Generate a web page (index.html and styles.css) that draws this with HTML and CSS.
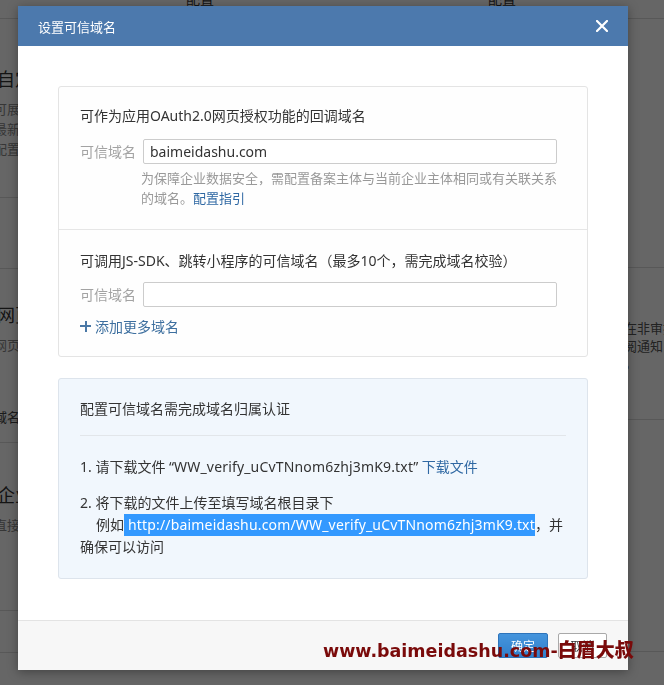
FILE: index.html
```html
<!DOCTYPE html>
<html lang="zh-CN">
<head>
    <meta charset="UTF-8">
    <meta name="viewport" content="width=device-width, initial-scale=1.0">
    <title>设置可信域名</title>
    <link rel="stylesheet" href="styles.css">
</head>
<body>
    <!-- page behind the dialog -->
    <div class="page">
        <div class="page-col page-left">
            <div class="bg-row bg-top"><span class="bg-cell">配置</span></div>
            <div class="bg-row bg-block1">
                <div class="bg-title">自定义菜单</div>
                <div class="bg-desc">可展示在应用会话中</div>
                <div class="bg-desc">最新内容</div>
                <div class="bg-desc">配置</div>
            </div>
            <div class="bg-row bg-block2"></div>
            <div class="bg-row bg-block3">
                <div class="bg-title">网页授权及JS-SDK</div>
                <div class="bg-desc">网页可调用</div>
                <div class="bg-desc bg-name">域名</div>
            </div>
            <div class="bg-row bg-block4"></div>
            <div class="bg-row bg-block5">
                <div class="bg-title">企业微信I</div>
                <div class="bg-desc">直接回调</div>
            </div>
            <div class="bg-row bg-block6"></div>
        </div>
        <div class="page-col page-right">
            <div class="bg-row bg-top"><span class="bg-cell">配置</span></div>
            <div class="bg-row bg-rblock1"></div>
            <div class="bg-row bg-rblock2">
                <div class="bg-desc">应用申请可在非审批</div>
                <div class="bg-desc">已完成签订阅通知</div>
                <div class="bg-desc">员工均可见。</div>
            </div>
            <div class="bg-row bg-rblock3"></div>
        </div>
    </div>
    <div class="mask"></div>

    <div class="dialog">
        <div class="dialog-hd">
            <span class="dialog-title">设置可信域名</span>
            <a class="dialog-close" href="#">
                <svg width="12" height="12" viewBox="0 0 12 12"><path d="M1 1 L11 11 M11 1 L1 11" stroke="#fff" stroke-width="2.2" stroke-linecap="square"/></svg>
            </a>
        </div>
        <div class="dialog-bd">
            <div class="panel">
                <div class="panel-sec">
                    <p class="sec-title">可作为应用OAuth2.0网页授权功能的回调域名</p>
                    <div class="field">
                        <label class="field-label">可信域名</label>
                        <div class="field-ctrl">
                            <input class="field-input" type="text" value="baimeidashu.com">
                            <p class="hint">为保障企业数据安全，需配置备案主体与当前企业主体相同或有关联关系的域名。<a class="link" href="#">配置指引</a></p>
                        </div>
                    </div>
                </div>
                <div class="panel-sec">
                    <p class="sec-title">可调用JS-SDK、跳转小程序的可信域名（最多10个，需完成域名校验）</p>
                    <div class="field">
                        <label class="field-label">可信域名</label>
                        <div class="field-ctrl">
                            <input class="field-input" type="text" value="">
                        </div>
                    </div>
                    <a class="add-more" href="#"><span class="plus"></span>添加更多域名</a>
                </div>
            </div>

            <div class="notice">
                <p class="notice-title">配置可信域名需完成域名归属认证</p>
                <p class="step">1. 请下载文件 “<span class="code">WW_verify_uCvTNnom6zhj3mK9.txt</span>” <a class="link" href="#">下载文件</a></p>
                <p class="step step2">2. 将下载的文件上传至填写域名根目录下<br><span class="indent">例如</span><span class="selected"><span class="code">http://baimeidashu.com/WW_verify_uCvTNnom6zhj3mK9.txt</span></span>，并<br>确保可以访问</p>
            </div>
        </div>
        <div class="dialog-ft">
            <button class="btn btn-primary">确定</button>
            <button class="btn">取消</button>
        </div>
    </div>

    <div class="watermark">www.baimeidashu.com-<span class="wm-cn">白眉大叔</span></div>
</body>
</html>
```

FILE: styles.css
```css
* {
    margin: 0;
    padding: 0;
    box-sizing: border-box;
}

body {
    font-family: 'Noto Sans', 'Noto Sans CJK SC', sans-serif;
    font-size: 14px;
    color: #333;
    background: #fff;
    width: 664px;
    height: 685px;
    overflow: hidden;
}

/* background page */
.page {
    display: flex;
    font-family: 'Noto Sans CJK SC', sans-serif;
}

.page-left {
    width: 340px;
}

.page-right {
    width: 324px;
}

.bg-row {
    border-bottom: 1px solid #dcdcdc;
}

.bg-top {
    height: 31px;
}

.bg-cell {
    display: block;
    margin-top: -12px;
    font-size: 14px;
    line-height: 20px;
}

.page-left .bg-cell {
    padding-left: 186px;
}

.page-right .bg-cell {
    padding-left: 148px;
}

.bg-block1 {
    height: 179px;
    padding-top: 47px;
}

.bg-title {
    font-size: 18px;
    line-height: 24px;
    margin-left: -3px;
    white-space: nowrap;
    margin-bottom: 9px;
}

.bg-desc {
    font-size: 13px;
    line-height: 20px;
    color: #888;
    white-space: nowrap;
}

.page-left .bg-desc {
    margin-left: -6px;
}

.bg-block2 {
    height: 71px;
}

.bg-block3 {
    height: 152px;
    padding-top: 33px;
}

.bg-name {
    margin-top: 52px;
    color: #444;
}

.bg-block4 {
    height: 22px;
}

.bg-block5 {
    height: 168px;
    padding-top: 39px;
}

.bg-block6 {
    height: 42px;
}

.bg-rblock1 {
    height: 249px;
}

.bg-rblock2 {
    height: 152px;
    padding-top: 51px;
}

.bg-rblock2 .bg-desc {
    line-height: 17.5px;
    padding-left: 219px;
    color: #555;
}

.bg-rblock3 {
    height: 232px;
}

.mask {
    position: fixed;
    inset: 0;
    background: rgba(0, 0, 0, 0.6);
}

/* dialog */
.dialog {
    position: absolute;
    left: 18px;
    top: 6px;
    width: 610px;
    background: #fff;
    box-shadow: 0 2px 10px rgba(0, 0, 0, 0.35);
}

.dialog-hd {
    height: 40px;
    padding: 0 20px;
    background: #4c79ad;
    display: flex;
    align-items: center;
    justify-content: space-between;
}

.dialog-title {
    color: #fff;
    font-family: 'Noto Sans CJK SC', sans-serif;
    font-size: 13px;
}

.dialog-close {
    display: flex;
}

.dialog-bd {
    padding: 40px 40px 41px;
}

.panel {
    border: 1px solid #e4e4e4;
    border-radius: 3px;
    background: #fefefe;
}

.panel-sec {
    padding: 19px 21px 21px;
}

.panel-sec + .panel-sec {
    border-top: 1px solid #e6e6e6;
    padding: 21px 21px 20px;
}

.sec-title {
    line-height: 20px;
    margin-bottom: 13px;
}

.panel-sec + .panel-sec .sec-title {
    margin-bottom: 11px;
}

.field {
    display: flex;
}

.field-label {
    width: 63px;
    height: 25px;
    line-height: 25px;
    color: #a3a3a3;
    font-family: 'Noto Sans CJK SC', sans-serif;
}

.field-ctrl {
    width: 420px;
}

.field-input {
    display: block;
    width: 414px;
    height: 25px;
    border: 1px solid #ccc;
    border-radius: 2px;
    padding: 0 6px;
    font: inherit;
    font-size: 14px;
    color: #333;
    background: #fff;
    outline: none;
}

.hint {
    margin-top: 4px;
    margin-left: -2px;
    font-size: 13px;
    line-height: 20px;
    color: #999;
    font-family: 'Noto Sans CJK SC', sans-serif;
}

.link {
    color: #2f68a3;
    text-decoration: none;
}

.add-more {
    display: flex;
    align-items: center;
    margin-top: 9px;
    line-height: 20px;
    color: #3d6f9f;
    text-decoration: none;
    font-family: 'Noto Sans CJK SC', sans-serif;
}

.plus {
    position: relative;
    width: 11px;
    height: 11px;
    margin-right: 4px;
}

.plus::before,
.plus::after {
    content: '';
    position: absolute;
    background: #4a78a6;
}

.plus::before {
    left: 0;
    top: 4.5px;
    width: 11px;
    height: 2px;
}

.plus::after {
    left: 4.5px;
    top: 0;
    width: 2px;
    height: 11px;
}

.notice {
    margin-top: 21px;
    border: 1px solid #dde4ec;
    border-radius: 3px;
    background: #f1f7fd;
    padding: 20px 21px 20px;
}

.notice-title {
    line-height: 20px;
    padding-bottom: 16px;
    border-bottom: 1px solid #e2e6ea;
}

.step {
    margin-top: 20px;
    line-height: 22px;
}

.step2 {
    margin-top: 14px;
}

.code {
    letter-spacing: 0.17px;
}

.indent {
    padding-left: 16px;
}

.selected {
    display: inline-block;
    background: #3399ff;
    color: #fff;
    padding-left: 4px;
    line-height: 22px;
}

/* footer */
.dialog-ft {
    height: 50px;
    background: #f7f7f7;
    border-top: 1px solid #e3e3e3;
    display: flex;
    justify-content: flex-end;
    gap: 10px;
    padding: 12px 21px 0;
}

.btn {
    width: 49px;
    height: 25px;
    border: 1px solid #a9a9a9;
    border-radius: 2px;
    background: #fff;
    font-family: 'Noto Sans CJK SC', sans-serif;
    font-size: 12px;
    color: #333;
}

.btn-primary {
    width: 50px;
    background: linear-gradient(#4595dd, #317fcb);
    border-color: #2e74bb;
    color: #fff;
}

.watermark {
    position: absolute;
    left: 323px;
    top: 636px;
    font-family: 'DejaVu Sans', sans-serif;
    font-weight: bold;
    font-size: 17.5px;
    line-height: 26px;
    color: #7a0a0a;
    white-space: nowrap;
}

.wm-cn {
    font-family: 'Noto Sans CJK SC', sans-serif;
    font-weight: 900;
    font-size: 19px;
}
```
